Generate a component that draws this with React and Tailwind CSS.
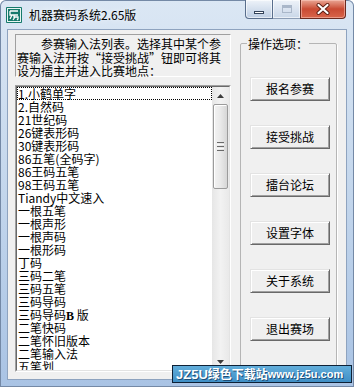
import React from 'react';

const methods = [
  '1.小鹤单字', '2.自然码', '21世纪码', '26键表形码', '30键表形码', '86五笔(全码字)',
  '86王码五笔', '98王码五笔', 'Tiandy中文速入', '一根五笔', '一根声形', '一根声码',
  '一根形码', '丁码', '三码二笔', '三码五笔', '三码导码', '三码导码B版', '二笔快码',
  '二笔怀旧版本', '二笔输入法', '五笔划', '五笔字型',
];

const actions = ['报名参赛', '接受挑战', '擂台论坛', '设置字体', '关于系统', '退出赛场'];

function AppIcon() {
  return (
    <svg width="16" height="16" viewBox="0 0 16 16">
      <rect x="0" y="0" width="16" height="16" rx="1" fill="#167a6c" />
      <rect x="1.5" y="1.5" width="13" height="13" fill="none" stroke="#e8f6f2" strokeWidth="1" />
      <path d="M4 4h8M4 4v4h8M6 8l-2 4M8 8v2h4v2l-1 1M9 10l-2 3" fill="none" stroke="#fff" strokeWidth="1.3" />
    </svg>
  );
}

function CaptionButtons() {
  return (
    <div className="ml-auto mr-[8px] flex h-[19px] self-start">
      <div className="flex h-full w-[28px] items-end justify-center rounded-bl-[4px] border border-t-0 border-[#596e8c] bg-gradient-to-b from-[#eef3f9] via-[#d5e0ee] to-[#bccde3] pb-[4px] shadow-[inset_0_0_0_1px_rgba(255,255,255,0.6)]">
        <div className="h-[3px] w-[10px] border border-[#33435a] bg-white" />
      </div>
      <div className="flex h-full w-[27px] items-center justify-center border-b border-[#8c9db5] bg-gradient-to-b from-[#eef3f9] via-[#dbe4f0] to-[#c9d7e8] shadow-[inset_0_0_0_1px_rgba(255,255,255,0.6)]">
        <div className="h-[8px] w-[10px] border border-[#aab7c9] bg-transparent shadow-[inset_0_2px_0_#aab7c9]" />
      </div>
      <div className="flex h-full w-[46px] items-center justify-center rounded-br-[4px] border border-t-0 border-[#6b2a1f] bg-gradient-to-b from-[#e8a594] via-[#c94a33] to-[#d8654a] shadow-[inset_0_0_0_1px_rgba(255,210,200,0.5)]">
        <svg width="14" height="12" viewBox="0 0 14 12">
          <path d="M2.5 2l9 8M11.5 2l-9 8" stroke="#5b1d12" strokeWidth="4" strokeLinecap="round" />
          <path d="M2.5 2l9 8M11.5 2l-9 8" stroke="#fff" strokeWidth="2.2" strokeLinecap="round" />
        </svg>
      </div>
    </div>
  );
}

function Arrow({ up }) {
  return (
    <svg width="7" height="4" viewBox="0 0 7 4">
      <path d={up ? 'M0 4L3.5 0L7 4Z' : 'M0 0L3.5 4L7 0Z'} fill="#3d3d3d" />
    </svg>
  );
}

function ScrollBar() {
  return (
    <div className="flex w-[17px] flex-col bg-gradient-to-r from-[#e6e6e6] via-[#f2f2f2] to-[#e9e9e9]">
      <div className="flex h-[17px] items-center justify-center">
        <Arrow up />
      </div>
      <div className="mx-[1px] flex h-[85px] items-center justify-center rounded-[2px] border border-[#9b9b9b] bg-gradient-to-r from-[#f3f3f3] via-[#e9e9e9] to-[#d6d6d6] shadow-[inset_1px_1px_0_#fff]">
        <div className="flex flex-col gap-[1px]">
          <div className="h-[1px] w-[7px] bg-[#6a6a6a]" />
          <div className="h-[1px] w-[7px] bg-[#f8f8f8]" />
          <div className="h-[1px] w-[7px] bg-[#6a6a6a]" />
          <div className="h-[1px] w-[7px] bg-[#f8f8f8]" />
          <div className="h-[1px] w-[7px] bg-[#6a6a6a]" />
        </div>
      </div>
      <div className="flex-1" />
      <div className="flex h-[17px] items-center justify-center">
        <Arrow />
      </div>
    </div>
  );
}

function MethodList() {
  return (
    <div className="mt-[8px] h-[287px] border border-t-[#a0a0a0] border-l-[#a0a0a0] border-b-white border-r-white">
      <div className="flex h-full border border-t-[#696969] border-l-[#696969] border-b-[#e3e3e3] border-r-[#e3e3e3] bg-white">
        <div className="flex-1 overflow-hidden">
          {methods.map((m, i) => (
            <div
              key={m}
              className={`h-[13px] whitespace-nowrap pl-[1px] text-[12px] leading-[13px] text-black ${i === 0 ? 'outline-1 -outline-offset-1 outline-dotted outline-black' : ''}`}
            >
              {m === '三码导码B版' ? (
                <>三码导码<b className="font-['Liberation_Serif',serif]">B</b> 版</>
              ) : m}
            </div>
          ))}
        </div>
        <ScrollBar />
      </div>
    </div>
  );
}

export default function App() {
  return (
    <div className="relative flex h-[387px] w-[354px] flex-col overflow-hidden rounded-t-[6px] bg-gradient-to-b from-[#dbe7f4] via-[#c3d6ec] to-[#a9c3e4] font-['Noto_Sans_CJK_SC',sans-serif] shadow-[inset_0_0_0_1px_#7489a6]">
      {/* title bar */}
      <div className="flex h-[29px] items-center">
        <div className="ml-[6px] mt-[1px]">
          <AppIcon />
        </div>
        <div className="ml-[7px] text-[12px] text-black [text-shadow:0_0_6px_#fff]">机器赛码系统2.65版</div>
        <CaptionButtons />
      </div>

      {/* client area */}
      <div className="mx-[7px] flex h-[351px] border border-[#8ea3bf] bg-[#f0f0f0] pl-[7px] pt-[4px] text-[12px] text-black">
        <div className="w-[216px]">
          <div className="h-[43px] border border-t-[#a0a0a0] border-l-[#a0a0a0] border-b-white border-r-white pl-[1px] pt-[2px] leading-[13.5px] whitespace-nowrap">
            <div className="pl-[24px]">参赛输入法列表。选择其中某个参</div>
            <div>赛输入法开按“接受挑战”钮即可将其</div>
            <div>设为擂主并进入比赛地点：</div>
          </div>
          <MethodList />
        </div>

        <fieldset className="ml-[9px] mt-[3px] h-[334px] w-[97px] rounded-[2px] border border-[#b5b5b5] shadow-[1px_1px_0_#fff]">
          <legend className="ml-[6px] px-[1px] text-[12px] leading-[13px]">操作选项：</legend>
          <div className="ml-[9px] mt-[27px] flex flex-col gap-[24px]">
            {actions.map((a) => (
              <button
                key={a}
                className="h-[24px] w-[80px] border border-t-[#e3e3e3] border-l-[#e3e3e3] border-r-[#696969] border-b-[#696969] bg-[#efefef] text-[12px] leading-[20px] text-black shadow-[inset_1px_1px_0_#fff,inset_-1px_-1px_0_#a0a0a0]"
              >
                {a}
              </button>
            ))}
          </div>
        </fieldset>
      </div>

      {/* watermark */}
      <div className="absolute left-[172px] top-[365px] flex h-[18px] w-[180px] items-center whitespace-nowrap border border-[#0e2136] bg-gradient-to-b from-[#62aedb] to-[#3f8fc6] pl-[3px] font-bold text-white [text-shadow:1px_1px_0_#1d4f78]">
        <span className="font-['Liberation_Sans',sans-serif] text-[13px] leading-none">JZ5U</span>
        <span className="text-[12px] leading-none">绿色下载站</span>
        <span className="font-['Liberation_Sans',sans-serif] text-[11px] leading-none">www.jz5u.com</span>
      </div>
    </div>
  );
}
